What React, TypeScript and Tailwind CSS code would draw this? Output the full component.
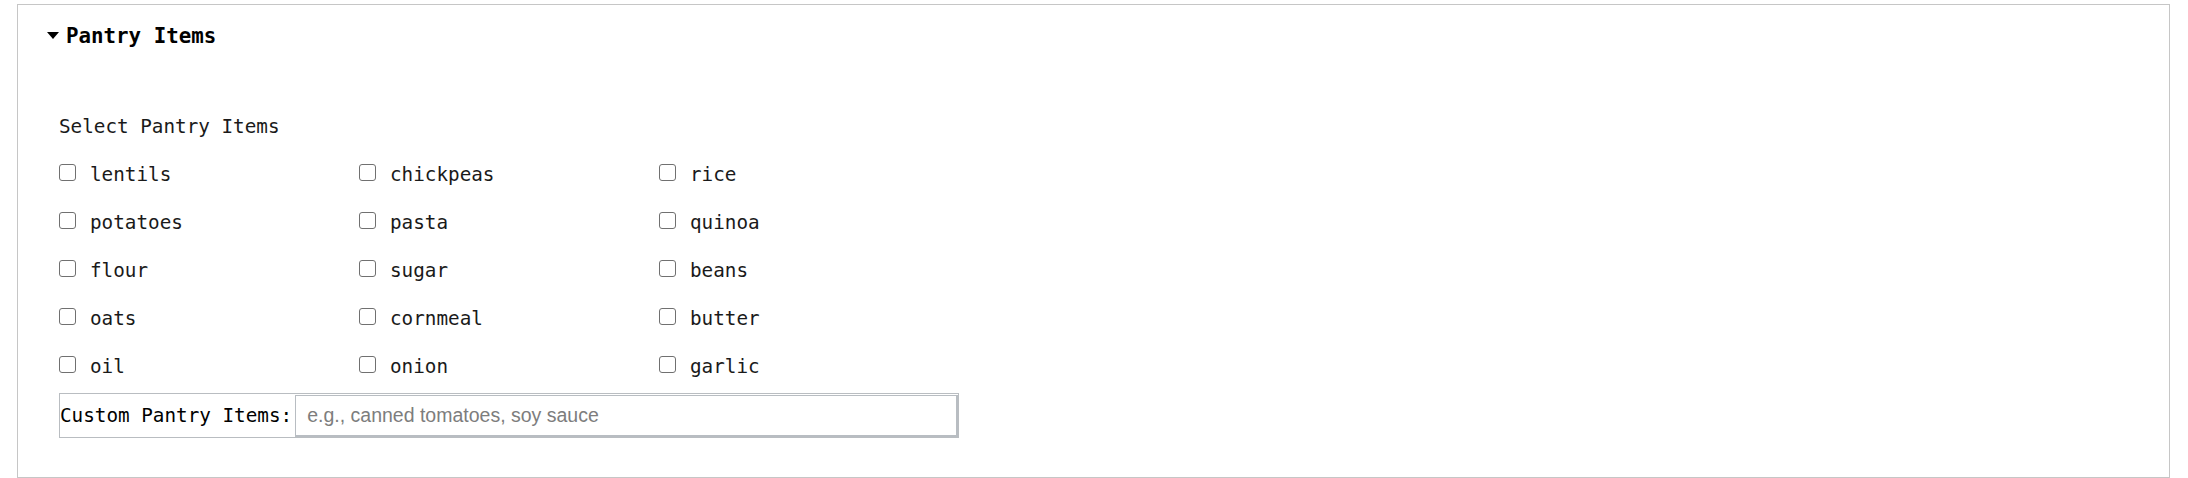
import React from "react";

const items = [
  "lentils", "chickpeas", "rice",
  "potatoes", "pasta", "quinoa",
  "flour", "sugar", "beans",
  "oats", "cornmeal", "butter",
  "oil", "onion", "garlic",
];

const mono = { fontFamily: '"DejaVu Sans Mono", "Liberation Mono", monospace' };

export default function App() {
  return (
    <div className="w-full h-[478px] bg-white pt-[4px] overflow-hidden" style={mono}>
      <div className="ml-[17px] mr-[18px] h-[474px] border border-[#c6c6c6] box-border">
        <div className="pl-[29px] pt-[18px] flex items-center h-[26px] box-content">
          <svg width="12" height="7" viewBox="0 0 12 7" className="mr-[7px] -mt-[1px]">
            <polygon points="0,0 12,0 6,7" fill="#000" />
          </svg>
          <span className="text-[20.8px] leading-[26px] font-bold text-black">Pantry Items</span>
        </div>
        <div className="pl-[41px]">
          <div className="mt-[66px] text-[19.3px] leading-[24px] text-[#1a1a1a]">
            Select Pantry Items
          </div>
          <div className="mt-[24px] grid grid-cols-[300px_300px_300px] gap-y-[24px]">
            {items.map((it) => (
              <label key={it} className="flex items-start text-[19.3px] leading-[24px] text-[#1a1a1a]">
                <input
                  type="checkbox"
                  className="appearance-none w-[17px] h-[17px] mt-[1px] border-[1.5px] border-[#707070] rounded-[3px] bg-white shrink-0"
                />
                <span className="ml-[14px]">{it}</span>
              </label>
            ))}
          </div>
          <div className="mt-[14px] w-[900px] h-[45px] border border-[#b9bdc1] flex items-stretch box-border">
            <span className="self-center text-[19.3px] leading-[24px] text-black whitespace-nowrap">
              Custom Pantry Items:
            </span>
            <input
              type="text"
              placeholder="e.g., canned tomatoes, soy sauce"
              className="ml-[3px] mt-[1px] flex-1 min-w-0 border-t border-l border-r-2 border-b-2 border-[#b8bdc2] pl-[11px] text-[19.5px] outline-none placeholder:text-[#7d7d7d]"
              style={{ fontFamily: '"Liberation Sans", Arial, sans-serif' }}
            />
          </div>
        </div>
      </div>
    </div>
  );
}
